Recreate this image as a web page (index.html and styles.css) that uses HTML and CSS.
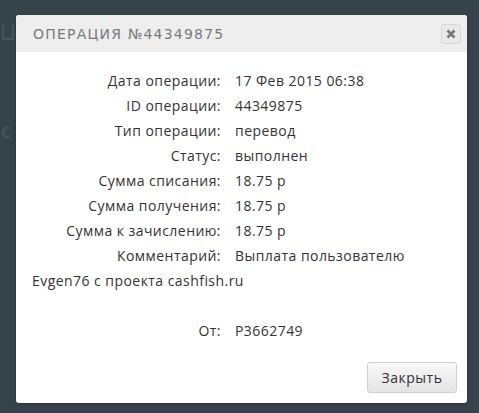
FILE: index.html
```html
<!DOCTYPE html>
<html lang="ru">
<head>
<meta charset="utf-8">
<link rel="stylesheet" href="styles.css">
</head>
<body>
<div class="backdrop">
  <span class="ghost ghost-top">Ц</span>
  <span class="ghost ghost-mid">с</span>
  <div class="modal">
    <div class="modal-header">
      <h2 class="modal-title">Операция №44349875</h2>
      <button class="close-btn" aria-label="Закрыть">
        <svg width="10" height="10" viewBox="0 0 10 10"><path d="M1.5 1.5L8.5 8.5M8.5 1.5L1.5 8.5" stroke="#777" stroke-width="2.6" stroke-linecap="butt"/></svg>
      </button>
    </div>
    <div class="modal-body">
      <div class="row"><span class="label">Дата операции:</span><span class="value">17 Фев 2015 06:38</span></div>
      <div class="row"><span class="label">ID операции:</span><span class="value">44349875</span></div>
      <div class="row"><span class="label">Тип операции:</span><span class="value">перевод</span></div>
      <div class="row"><span class="label">Статус:</span><span class="value">выполнен</span></div>
      <div class="row"><span class="label">Сумма списания:</span><span class="value">18.75 р</span></div>
      <div class="row"><span class="label">Сумма получения:</span><span class="value">18.75 р</span></div>
      <div class="row"><span class="label">Сумма к зачислению:</span><span class="value">18.75 р</span></div>
      <div class="row"><span class="label">Комментарий:</span><span class="value">Выплата пользователю Evgen76 с проекта cashfish.ru</span></div>
      <div class="row row-from"><span class="label">От:</span><span class="value">P3662749</span></div>
    </div>
    <div class="modal-footer">
      <button class="btn">Закрыть</button>
    </div>
  </div>
</div>
</body>
</html>
```
FILE: styles.css
```css
html, body {
  margin: 0;
  padding: 0;
  background: #37434b;
}
.backdrop {
  position: relative;
  width: 479px;
  height: 413px;
  overflow: hidden;
  padding: 15px 12px 10px 16px;
  box-sizing: border-box;
}
.ghost {
  position: absolute;
  font-family: "Open Sans", sans-serif;
  color: #4a565e;
  font-size: 22px;
}
.ghost-top { left: 0; top: 16px; width: 14px; overflow: hidden; }
.ghost-mid { left: 1px; top: 117px; font-size: 20px; }
.modal {
  position: relative;
  width: 451px;
  height: 388px;
  background: #fff;
  border-radius: 3px;
  display: flex;
  flex-direction: column;
  box-shadow: 0 1px 3px rgba(0,0,0,0.3);
}
.modal-header {
  height: 37px;
  background: #eeeeee;
  border-radius: 3px 3px 0 0;
  display: flex;
  align-items: center;
  justify-content: space-between;
  padding: 0 6px 0 17px;
}
.modal-title {
  margin: 0;
  font-family: "DejaVu Sans", sans-serif;
  font-weight: normal;
  font-size: 14px;
  letter-spacing: 1.2px;
  text-transform: uppercase;
  color: #7a7a7a;
}
.close-btn {
  width: 20px;
  height: 20px;
  padding: 0;
  border: 1px solid #d6d6d6;
  border-radius: 3px;
  background: #e9e9e9;
  display: flex;
  align-items: center;
  justify-content: center;
}
.modal-body {
  flex: 1;
  padding: 16px 20px 0 16px;
  font-family: "Open Sans", sans-serif;
  font-size: 14px;
  letter-spacing: 0.45px;
  line-height: 25px;
  color: #333;
}
.label {
  display: inline-block;
  width: 189px;
  text-align: right;
  margin-right: 14px;
}
.row-from {
  margin-top: 25px;
}
.modal-footer {
  display: flex;
  justify-content: flex-end;
  padding: 0 10px 10px 0;
}
.btn {
  width: 90px;
  height: 31px;
  border: 1px solid #cfcfcf;
  border-radius: 3px;
  background: linear-gradient(#f8f8f8, #e4e4e4);
  font-family: "Open Sans", sans-serif;
  font-size: 14px;
  letter-spacing: 0.5px;
  color: #333;
  padding: 0;
}
```
